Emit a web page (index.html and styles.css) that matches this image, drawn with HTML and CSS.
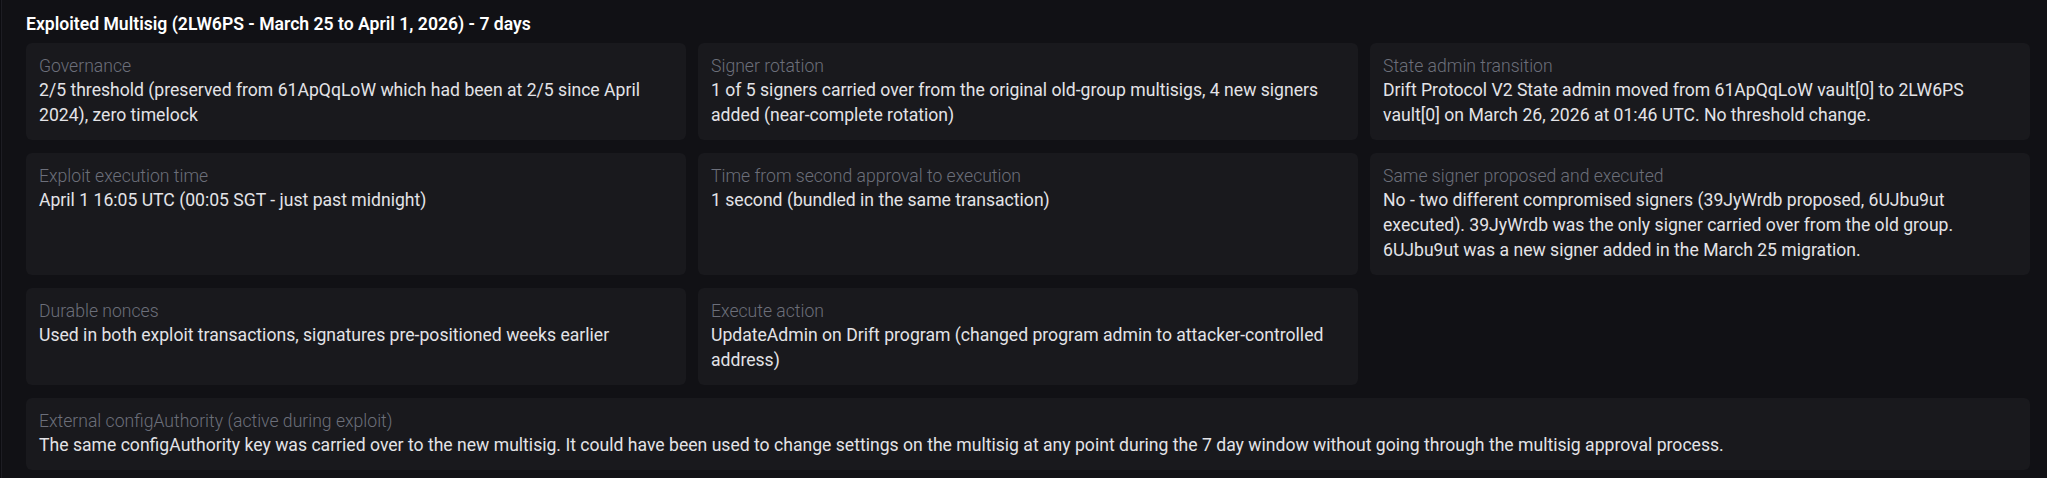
FILE: index.html
```html
<!DOCTYPE html>
<html lang="en">
<head>
<meta charset="utf-8">
<title>Exploited Multisig</title>
<link rel="stylesheet" href="styles.css">
</head>
<body>
<section class="panel">
  <h2 class="panel-title">Exploited Multisig (2LW6PS - March 25 to April 1, 2026) - 7 days</h2>
  <div class="grid">
    <div class="card">
      <div class="label">Governance</div>
      <div class="value">2/5 threshold (preserved from 61ApQqLoW which had been at 2/5 since April 2024), zero timelock</div>
    </div>
    <div class="card">
      <div class="label">Signer rotation</div>
      <div class="value">1 of 5 signers carried over from the original old-group multisigs, 4 new signers added (near-complete rotation)</div>
    </div>
    <div class="card">
      <div class="label">State admin transition</div>
      <div class="value">Drift Protocol V2 State admin moved from 61ApQqLoW vault[0] to 2LW6PS vault[0] on March 26, 2026 at 01:46 UTC. No threshold change.</div>
    </div>
    <div class="card">
      <div class="label">Exploit execution time</div>
      <div class="value">April 1 16:05 UTC (00:05 SGT - just past midnight)</div>
    </div>
    <div class="card">
      <div class="label">Time from second approval to execution</div>
      <div class="value">1 second (bundled in the same transaction)</div>
    </div>
    <div class="card">
      <div class="label">Same signer proposed and executed</div>
      <div class="value">No - two different compromised signers (39JyWrdb proposed, 6UJbu9ut executed). 39JyWrdb was the only signer carried over from the old group. 6UJbu9ut was a new signer added in the March 25 migration.</div>
    </div>
    <div class="card">
      <div class="label">Durable nonces</div>
      <div class="value">Used in both exploit transactions, signatures pre-positioned weeks earlier</div>
    </div>
    <div class="card">
      <div class="label">Execute action</div>
      <div class="value">UpdateAdmin on Drift program (changed program admin to attacker-controlled address)</div>
    </div>
    <div class="card card-wide">
      <div class="label">External configAuthority (active during exploit)</div>
      <div class="value">The same configAuthority key was carried over to the new multisig. It could have been used to change settings on the multisig at any point during the 7 day window without going through the multisig approval process.</div>
    </div>
  </div>
</section>
</body>
</html>
```
FILE: styles.css
```css
html, body {
  margin: 0;
  padding: 0;
  background: #0c0c10;
}

body {
  font-family: Roboto, "Liberation Sans", sans-serif;
  color: #e3e3e7;
}

.panel {
  margin-left: 1px;
  border-left: 1px solid #1d1d23;
  background: #111115;
  padding: 12px 17px 8px 24px;
  min-height: 458px;
}

.panel-title {
  margin: 0 0 7px 0;
  font-size: 17.6px;
  line-height: 24px;
  font-weight: 600;
  color: #ffffff;
}

.grid {
  display: grid;
  grid-template-columns: repeat(3, 1fr);
  gap: 13px 12px;
}

.card {
  background: #19191d;
  border-radius: 6px;
  padding: 12px 13px;
}

.card-wide {
  grid-column: 1 / -1;
}

.label {
  font-size: 17.6px;
  line-height: 23px;
  font-weight: 300;
  color: #6c6f7a;
}

.value {
  font-size: 17.6px;
  line-height: 25px;
  color: #e3e3e7;
}
```
